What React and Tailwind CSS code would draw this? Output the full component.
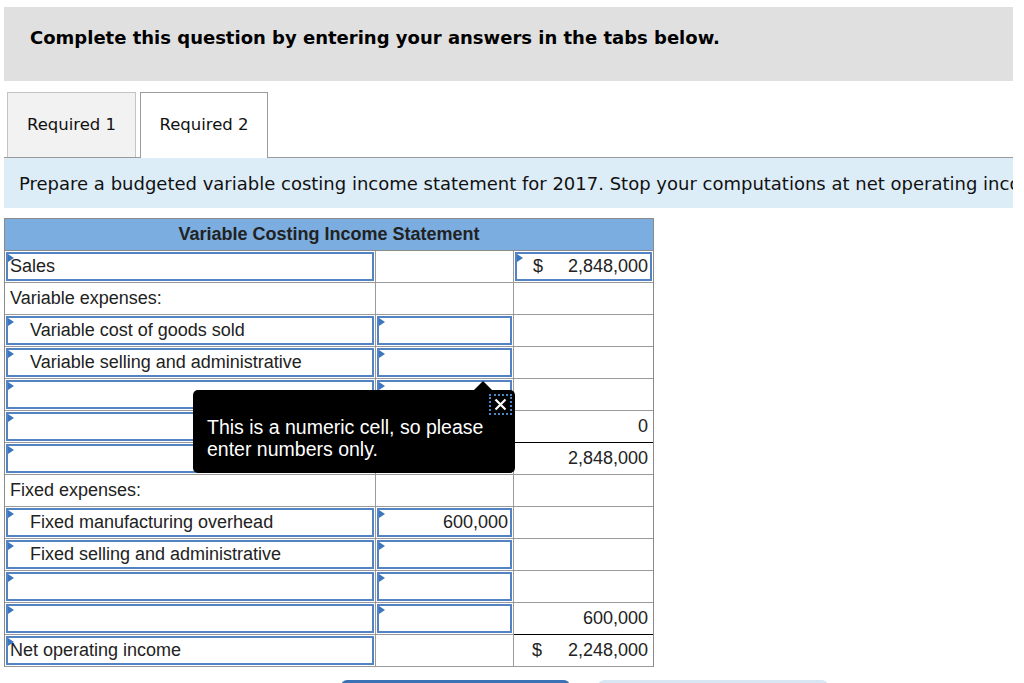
function Flag() {
  return (
    <span className="absolute top-0 left-0 w-0 h-0 border-y-[4px] border-y-transparent border-l-[6px] border-l-[#3b77c0]" />
  )
}

function InputCell({ children, indent, right, dollar, lastCol, bottomBlack }) {
  return (
    <div className={`h-[32px] p-px border-b ${bottomBlack ? 'border-b-black' : 'border-b-[#9a9a9a]'} ${lastCol ? '' : 'border-r border-r-[#9a9a9a]'}`}>
      <div className={`relative h-full border-2 border-[#5383c3] flex items-center ${indent ? 'pl-[22px]' : 'pl-[2px]'} ${right ? 'justify-end pr-[2px]' : ''}`}>
        <Flag />
        {dollar && <span className="absolute left-[16px]">$</span>}
        {children}
      </div>
    </div>
  )
}

function PlainCell({ children, right, dollar, lastCol, bottomBlack }) {
  return (
    <div className={`relative h-[32px] flex items-center border-b ${bottomBlack ? 'border-b-black' : 'border-b-[#9a9a9a]'} ${lastCol ? '' : 'border-r border-r-[#9a9a9a]'} ${right ? 'justify-end pr-[5px]' : 'pl-[5px]'}`}>
      {dollar && <span className="absolute left-[18px]">$</span>}
      {children}
    </div>
  )
}

export default function App() {
  return (
    <div className="bg-white min-h-screen font-['DejaVu_Sans',sans-serif] text-[#111]">
      <div className="w-[1009px] ml-[4px] pt-[7px]">
        <div className="h-[74px] bg-[#e0e0e0] pl-[26px] pt-[20px]">
          <p className="text-[18px] font-bold leading-[22px] text-black whitespace-nowrap">Complete this question by entering your answers in the tabs below.</p>
        </div>

        <div className="mt-[11px] flex items-end gap-[4px] pl-[3px] border-b border-[#9a9a9a]">
          <div className="w-[129px] h-[65px] border border-b-0 border-[#c4c4c4] bg-[#f2f2f2] flex items-center justify-center text-[16.5px]">Required 1</div>
          <div className="w-[128px] h-[66px] -mb-px border border-b-0 border-[#9a9a9a] bg-white flex items-center justify-center text-[16.5px]">Required 2</div>
        </div>

        <div className="h-[50px] bg-[#ddedf8] flex items-center pl-[15px] overflow-hidden whitespace-nowrap text-[18px]">
          Prepare a budgeted variable costing income statement for 2017. Stop your computations at net operating income.
        </div>

        <div className="relative mt-[10px] w-[650px] border-l border-t border-r border-[#8a8a8a] font-['Liberation_Sans',Arial,sans-serif] text-[18px] text-[#222]">
          <div className="grid grid-cols-[371px_138px_139px]">
            <div className="col-span-3 h-[32px] bg-[#7badE0] border-b border-[#8a8a8a] flex items-center justify-center font-bold">Variable Costing Income Statement</div>

            <InputCell>Sales</InputCell>
            <PlainCell />
            <InputCell right dollar lastCol>2,848,000</InputCell>

            <PlainCell>Variable expenses:</PlainCell>
            <PlainCell />
            <PlainCell lastCol />

            <InputCell indent>Variable cost of goods sold</InputCell>
            <InputCell />
            <PlainCell lastCol />

            <InputCell indent>Variable selling and administrative</InputCell>
            <InputCell />
            <PlainCell lastCol />

            <InputCell />
            <InputCell />
            <PlainCell lastCol />

            <InputCell />
            <InputCell />
            <PlainCell right lastCol bottomBlack>0</PlainCell>

            <InputCell />
            <InputCell />
            <PlainCell right lastCol>2,848,000</PlainCell>

            <PlainCell>Fixed expenses:</PlainCell>
            <PlainCell />
            <PlainCell lastCol />

            <InputCell indent>Fixed manufacturing overhead</InputCell>
            <InputCell right>600,000</InputCell>
            <PlainCell lastCol />

            <InputCell indent>Fixed selling and administrative</InputCell>
            <InputCell />
            <PlainCell lastCol />

            <InputCell />
            <InputCell />
            <PlainCell lastCol />

            <InputCell />
            <InputCell />
            <PlainCell right lastCol bottomBlack>600,000</PlainCell>

            <InputCell>Net operating income</InputCell>
            <PlainCell />
            <PlainCell right dollar lastCol>2,248,000</PlainCell>
          </div>

          {/* tooltip over the numeric cell */}
          <span className="absolute left-[468px] top-[162px] w-0 h-0 border-x-[10px] border-x-transparent border-b-[10px] border-b-black" />
          <div className="absolute left-[188px] top-[171px] w-[322px] h-[83px] bg-black rounded-[5px] text-white text-[19.5px] leading-[22px] pl-[14px] pt-[26px]">
            <p>This is a numeric cell, so please</p>
            <p>enter numbers only.</p>
            <div className="absolute right-[3px] top-[4px] w-[23px] h-[21px] border-2 border-dotted border-[#4a86c8] flex items-center justify-center">
              <svg width="13" height="13" viewBox="0 0 13 13">
                <path d="M1.5 1.5 L11.5 11.5 M11.5 1.5 L1.5 11.5" stroke="white" strokeWidth="2.2" />
              </svg>
            </div>
          </div>
        </div>

        <div className="mt-[13px] flex gap-[28px] pl-[337px]">
          <div className="w-[229px] h-[40px] rounded-md bg-[#3b72b6]" />
          <div className="w-[230px] h-[40px] rounded-md bg-[#d9e7f5]" />
        </div>
      </div>
    </div>
  )
}
